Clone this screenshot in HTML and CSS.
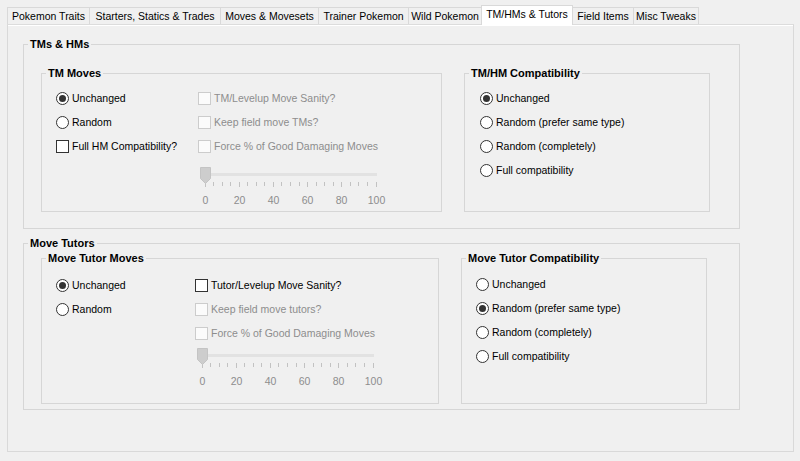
FILE: index.html
```html
<!DOCTYPE html>
<html>
<head>
<meta charset="utf-8">
<link rel="stylesheet" href="styles.css">
</head>
<body>
<div class="tabs">
  <div class="tab t1">Pokemon Traits</div>
  <div class="tab t2">Starters, Statics &amp; Trades</div>
  <div class="tab t3">Moves &amp; Movesets</div>
  <div class="tab t4">Trainer Pokemon</div>
  <div class="tab t5">Wild Pokemon</div>
  <div class="tab t6 sel">TM/HMs &amp; Tutors</div>
  <div class="tab t7">Field Items</div>
  <div class="tab t8">Misc Tweaks</div>
</div>
<div class="panel">
  <fieldset class="group group-tm">
    <legend>TMs &amp; HMs</legend>
    <div class="gbody gbody-tm">
      <fieldset class="sub sub-moves-tm">
        <legend>TM Moves</legend>
        <div class="sbody sbody-tm">
          <div class="col col-a-tm">
            <div class="row"><span class="radio on"></span><span class="lbl">Unchanged</span></div>
            <div class="row"><span class="radio"></span><span class="lbl">Random</span></div>
            <div class="row"><span class="check"></span><span class="lbl">Full HM Compatibility?</span></div>
          </div>
          <div class="col">
            <div class="row dis"><span class="check"></span><span class="lbl">TM/Levelup Move Sanity?</span></div>
            <div class="row dis"><span class="check"></span><span class="lbl">Keep field move TMs?</span></div>
            <div class="row dis"><span class="check"></span><span class="lbl">Force % of Good Damaging Moves</span></div>
            <svg class="slider slider-tm" width="190" height="44" viewBox="0 0 190 44">
              <rect x="15" y="9" width="166" height="3" fill="#e2e2e2"/>
              <g stroke="#c2c2c2" stroke-width="1">
                <line x1="9.5" y1="18" x2="9.5" y2="23"/><line x1="17.5" y1="18" x2="17.5" y2="22"/>
                <line x1="26.5" y1="18" x2="26.5" y2="22"/><line x1="34.5" y1="18" x2="34.5" y2="22"/>
                <line x1="43.5" y1="18" x2="43.5" y2="23"/><line x1="51.5" y1="18" x2="51.5" y2="22"/>
                <line x1="60.5" y1="18" x2="60.5" y2="22"/><line x1="68.5" y1="18" x2="68.5" y2="22"/>
                <line x1="77.5" y1="18" x2="77.5" y2="23"/><line x1="85.5" y1="18" x2="85.5" y2="22"/>
                <line x1="94.5" y1="18" x2="94.5" y2="22"/><line x1="103.5" y1="18" x2="103.5" y2="22"/>
                <line x1="111.5" y1="18" x2="111.5" y2="23"/><line x1="120.5" y1="18" x2="120.5" y2="22"/>
                <line x1="128.5" y1="18" x2="128.5" y2="22"/><line x1="137.5" y1="18" x2="137.5" y2="22"/>
                <line x1="145.5" y1="18" x2="145.5" y2="23"/><line x1="154.5" y1="18" x2="154.5" y2="22"/>
                <line x1="162.5" y1="18" x2="162.5" y2="22"/><line x1="171.5" y1="18" x2="171.5" y2="22"/>
                <line x1="180.5" y1="18" x2="180.5" y2="23"/>
              </g>
              <path d="M4.5 3.5 H14.5 V14.5 L9.5 19.5 L4.5 14.5 Z" fill="#cdcdcd" stroke="#c4c4c4"/>
              <g class="ticklbl" text-anchor="middle">
                <text x="9.5" y="40">0</text><text x="43.5" y="40">20</text><text x="77.5" y="40">40</text>
                <text x="111.5" y="40">60</text><text x="145.5" y="40">80</text><text x="180.5" y="40">100</text>
              </g>
            </svg>
          </div>
        </div>
      </fieldset>
      <fieldset class="sub sub-compat">
        <legend>TM/HM Compatibility</legend>
        <div class="sbody sbody-ctm">
          <div class="row"><span class="radio on"></span><span class="lbl">Unchanged</span></div>
          <div class="row"><span class="radio"></span><span class="lbl">Random (prefer same type)</span></div>
          <div class="row"><span class="radio"></span><span class="lbl">Random (completely)</span></div>
          <div class="row"><span class="radio"></span><span class="lbl">Full compatibility</span></div>
        </div>
      </fieldset>
    </div>
  </fieldset>

  <fieldset class="group group-tutor">
    <legend>Move Tutors</legend>
    <div class="gbody gbody-tutor">
      <fieldset class="sub sub-moves-tutor">
        <legend>Move Tutor Moves</legend>
        <div class="sbody sbody-tutor">
          <div class="col col-a-tutor">
            <div class="row"><span class="radio on"></span><span class="lbl">Unchanged</span></div>
            <div class="row"><span class="radio"></span><span class="lbl">Random</span></div>
          </div>
          <div class="col">
            <div class="row"><span class="check"></span><span class="lbl">Tutor/Levelup Move Sanity?</span></div>
            <div class="row dis"><span class="check"></span><span class="lbl">Keep field move tutors?</span></div>
            <div class="row dis"><span class="check"></span><span class="lbl">Force % of Good Damaging Moves</span></div>
            <svg class="slider slider-tutor" width="190" height="44" viewBox="0 0 190 44">
              <rect x="15" y="9" width="166" height="3" fill="#e2e2e2"/>
              <g stroke="#c2c2c2" stroke-width="1">
                <line x1="9.5" y1="18" x2="9.5" y2="23"/><line x1="17.5" y1="18" x2="17.5" y2="22"/>
                <line x1="26.5" y1="18" x2="26.5" y2="22"/><line x1="34.5" y1="18" x2="34.5" y2="22"/>
                <line x1="43.5" y1="18" x2="43.5" y2="23"/><line x1="51.5" y1="18" x2="51.5" y2="22"/>
                <line x1="60.5" y1="18" x2="60.5" y2="22"/><line x1="68.5" y1="18" x2="68.5" y2="22"/>
                <line x1="77.5" y1="18" x2="77.5" y2="23"/><line x1="85.5" y1="18" x2="85.5" y2="22"/>
                <line x1="94.5" y1="18" x2="94.5" y2="22"/><line x1="103.5" y1="18" x2="103.5" y2="22"/>
                <line x1="111.5" y1="18" x2="111.5" y2="23"/><line x1="120.5" y1="18" x2="120.5" y2="22"/>
                <line x1="128.5" y1="18" x2="128.5" y2="22"/><line x1="137.5" y1="18" x2="137.5" y2="22"/>
                <line x1="145.5" y1="18" x2="145.5" y2="23"/><line x1="154.5" y1="18" x2="154.5" y2="22"/>
                <line x1="162.5" y1="18" x2="162.5" y2="22"/><line x1="171.5" y1="18" x2="171.5" y2="22"/>
                <line x1="180.5" y1="18" x2="180.5" y2="23"/>
              </g>
              <path d="M4.5 3.5 H14.5 V14.5 L9.5 19.5 L4.5 14.5 Z" fill="#cdcdcd" stroke="#c4c4c4"/>
              <g class="ticklbl" text-anchor="middle">
                <text x="9.5" y="40">0</text><text x="43.5" y="40">20</text><text x="77.5" y="40">40</text>
                <text x="111.5" y="40">60</text><text x="145.5" y="40">80</text><text x="180.5" y="40">100</text>
              </g>
            </svg>
          </div>
        </div>
      </fieldset>
      <fieldset class="sub sub-compat">
        <legend>Move Tutor Compatibility</legend>
        <div class="sbody sbody-ctutor">
          <div class="row"><span class="radio"></span><span class="lbl">Unchanged</span></div>
          <div class="row"><span class="radio on"></span><span class="lbl">Random (prefer same type)</span></div>
          <div class="row"><span class="radio"></span><span class="lbl">Random (completely)</span></div>
          <div class="row"><span class="radio"></span><span class="lbl">Full compatibility</span></div>
        </div>
      </fieldset>
    </div>
  </fieldset>
</div>
</body>
</html>
```

FILE: styles.css
```css
* { box-sizing: border-box; }
html, body {
  margin: 0;
  padding: 0;
  background: #f0f0f0;
  font-family: "Liberation Sans", Arial, sans-serif;
  font-size: 10.5px;
  color: #000;
  width: 800px;
  height: 461px;
  overflow: hidden;
}

/* tabs */
.tabs {
  display: flex;
  align-items: flex-end;
  height: 24px;
  padding-left: 7px;
  position: relative;
  z-index: 2;
}
.tab {
  height: 17px;
  border: 1px solid #d9d9d9;
  border-bottom: none;
  margin-right: -1px;
  display: flex;
  align-items: center;
  justify-content: center;
  white-space: nowrap;
  background: #f0f0f0;
  line-height: 13px;
}
.tab.sel {
  height: 20px;
  margin-bottom: -1px;
  background: #fff;
  padding-bottom: 3px;
  position: relative;
}
.t1 { width: 83px; }
.t2 { width: 132px; }
.t3 { width: 99px; }
.t4 { width: 91px; }
.t5 { width: 74px; }
.t6 { width: 92px; }
.t7 { width: 62px; }
.t8 { width: 66px; }

/* panel */
.panel {
  margin-left: 7px;
  width: 787px;
  height: 428px;
  border: 1px solid #d9d9d9;
  border-top-color: #dcdcdc;
  padding-top: 13px;
  padding-left: 15px;
  box-shadow: inset 0 1px 0 #fff;
}

fieldset {
  margin: 0;
  padding: 0;
  border: 1px solid #d6d6d6;
  min-inline-size: 0;
}
legend {
  margin-left: 4px;
  padding: 0 2px;
  font-weight: bold;
  font-size: 11px;
  line-height: 13px;
  color: #000;
}

.group { width: 717px; }
.group-tutor { margin-top: 8px; }

.gbody {
  display: flex;
  gap: 22px;
  padding-left: 17px;
}
.gbody-tm { padding-top: 16px; padding-bottom: 16px; }
.gbody-tutor { padding-top: 2px; padding-bottom: 5px; }

.sub-moves-tm { width: 401px; }
.sub-moves-tutor { width: 398px; }
.sub-compat { width: 246px; }

.sbody {
  display: flex;
  padding-left: 14px;
}
.sbody-tm { height: 131px; padding-top: 6px; }
.sbody-tutor { height: 138px; padding-top: 8px; }
.sbody-ctm { height: 131px; padding-top: 6px; padding-left: 15px; flex-direction: column; }
.sbody-ctutor { height: 138px; padding-top: 7px; padding-left: 14px; flex-direction: column; }

.col { display: flex; flex-direction: column; }
.col-a-tm { width: 142px; }
.col-a-tutor { width: 139px; }

.row {
  height: 24px;
  display: flex;
  align-items: center;
  white-space: nowrap;
}
.lbl { margin-left: 3px; line-height: 13px; }
.row.dis .lbl { color: #8d8d8d; }

.radio {
  width: 13px;
  height: 13px;
  border: 1px solid #333;
  border-radius: 50%;
  background: #fff;
  display: flex;
  align-items: center;
  justify-content: center;
  flex: none;
}
.radio.on::after {
  content: "";
  width: 7px;
  height: 7px;
  border-radius: 50%;
  background: #333;
}
.check {
  width: 13px;
  height: 13px;
  border: 1px solid #333;
  background: #fff;
  flex: none;
}
.row.dis .check {
  border-color: #cccccc;
  background: #fbfbfb;
}

.slider { display: block; margin-left: -2px; }
.slider-tm { margin-top: 6px; }
.slider-tutor { margin-top: 0; }
.ticklbl {
  font-family: "Liberation Sans", Arial, sans-serif;
  font-size: 10.5px;
  fill: #8d8d8d;
}
```
